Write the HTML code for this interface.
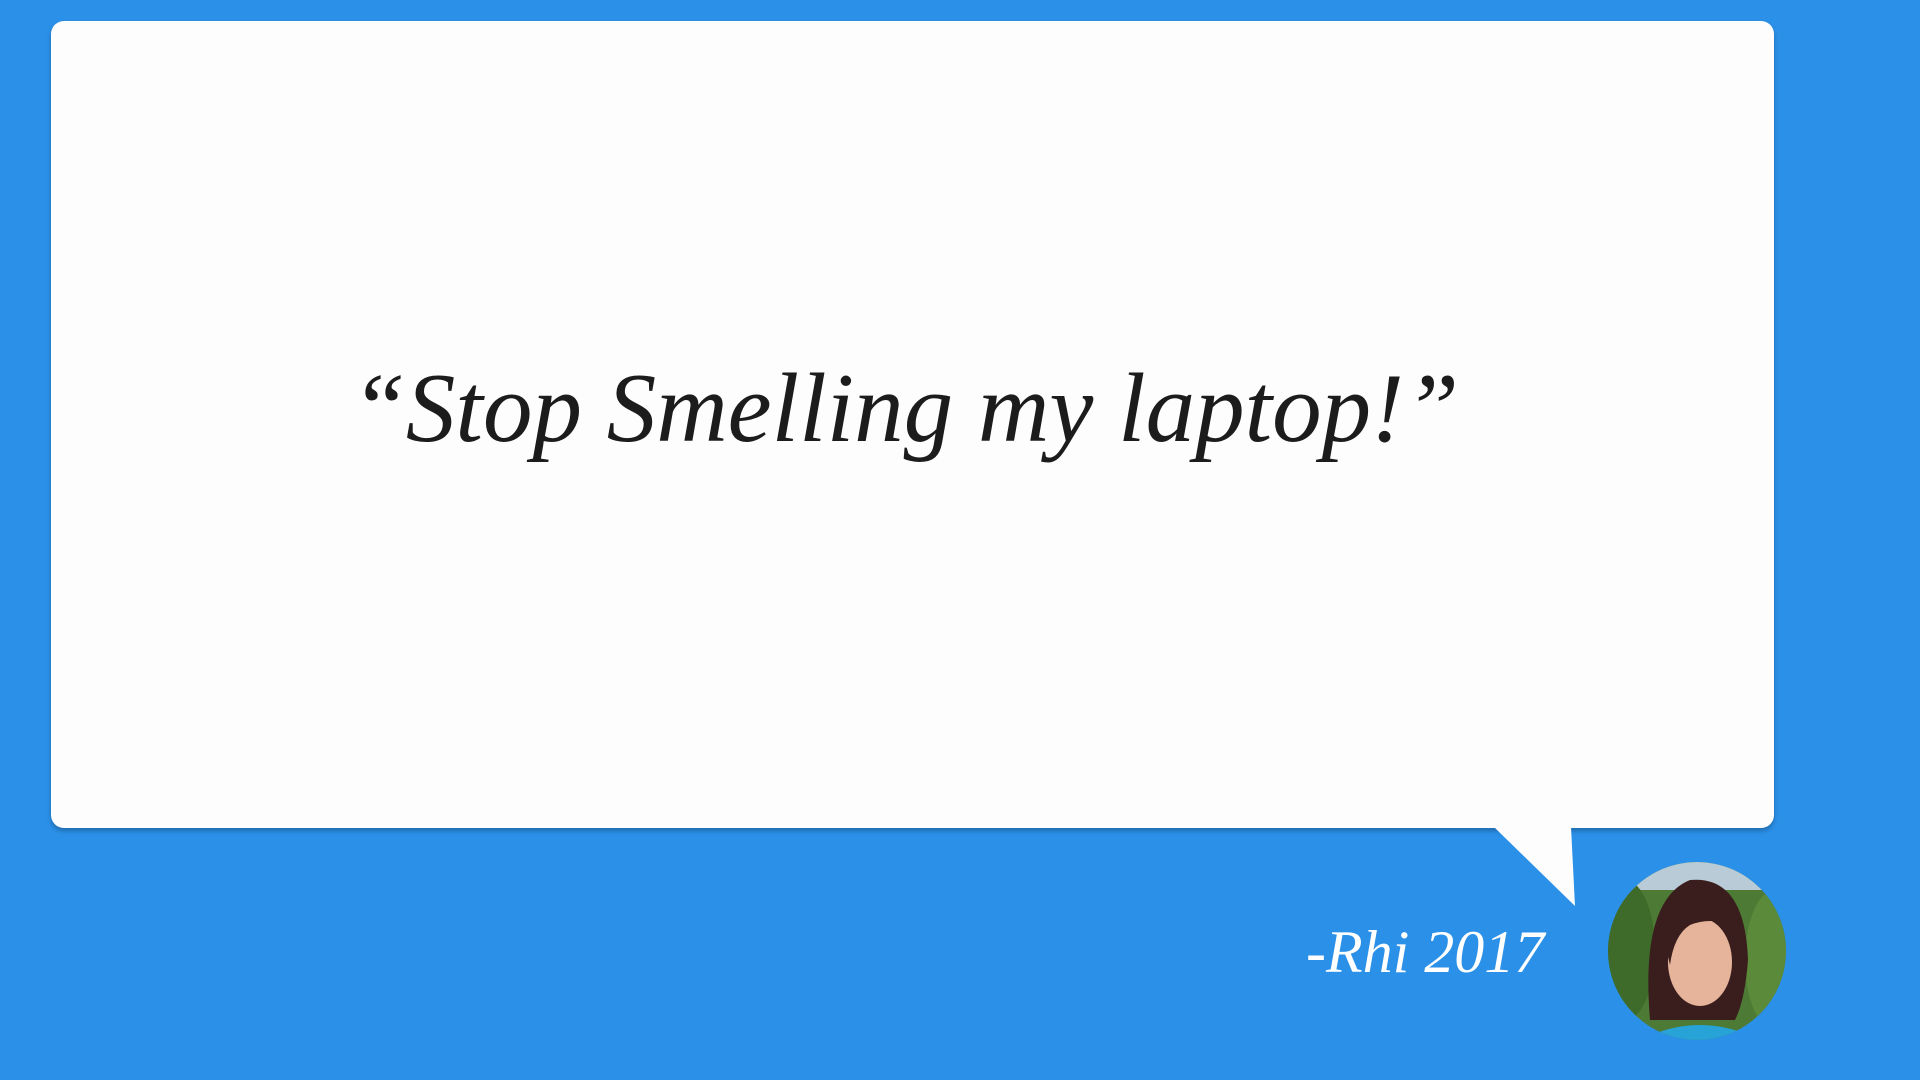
<!DOCTYPE html>
<html><head><style>
html,body{margin:0;padding:0;width:1920px;height:1080px;overflow:hidden;background:#2b90e8;}
.box{position:absolute;left:51px;top:21px;width:1723px;height:807px;background:#fdfdfd;border-radius:13px;box-shadow:0 3px 5px rgba(0,0,0,0.25);}
.q{position:absolute;left:0;top:352px;width:1810px;text-align:center;font-family:"Liberation Serif",serif;font-style:italic;font-size:99px;color:#1c1c1c;white-space:nowrap;}
.who{position:absolute;left:1306px;top:918px;font-family:"Liberation Serif",serif;font-style:italic;font-size:60px;color:#fff;white-space:nowrap;}
svg{position:absolute;left:0;top:0;}
</style></head><body>
<div class="box"></div>
<div class="q">“Stop Smelling my laptop!”</div>
<svg width="1920" height="1080">
<polygon points="1494,827 1571,827 1575,906" fill="#fdfdfd"/>
<defs><clipPath id="c"><circle cx="1697" cy="951" r="89"/></clipPath></defs>
<g clip-path="url(#c)">
<rect x="1600" y="860" width="200" height="200" fill="#4d7a34"/>
<rect x="1600" y="860" width="200" height="30" fill="#b8cbd6"/>
<ellipse cx="1625" cy="950" rx="30" ry="70" fill="#3e6a2a"/>
<ellipse cx="1775" cy="960" rx="30" ry="70" fill="#5a8a3a"/>
<path d="M1650 1020 Q1640 900 1690 880 Q1745 875 1748 960 Q1745 1000 1735 1020 Z" fill="#3a1e1e"/>
<ellipse cx="1700" cy="962" rx="32" ry="44" fill="#e6b49b"/>
<path d="M1662 930 Q1700 885 1740 930 Q1715 915 1690 925 Q1674 935 1670 965 Z" fill="#3a1e1e"/>
<path d="M1640 1040 Q1700 1010 1760 1040 L1760 1060 L1640 1060 Z" fill="#27a3d8"/>
</g>
</svg>
<div class="who">-Rhi 2017</div>
</body></html>
